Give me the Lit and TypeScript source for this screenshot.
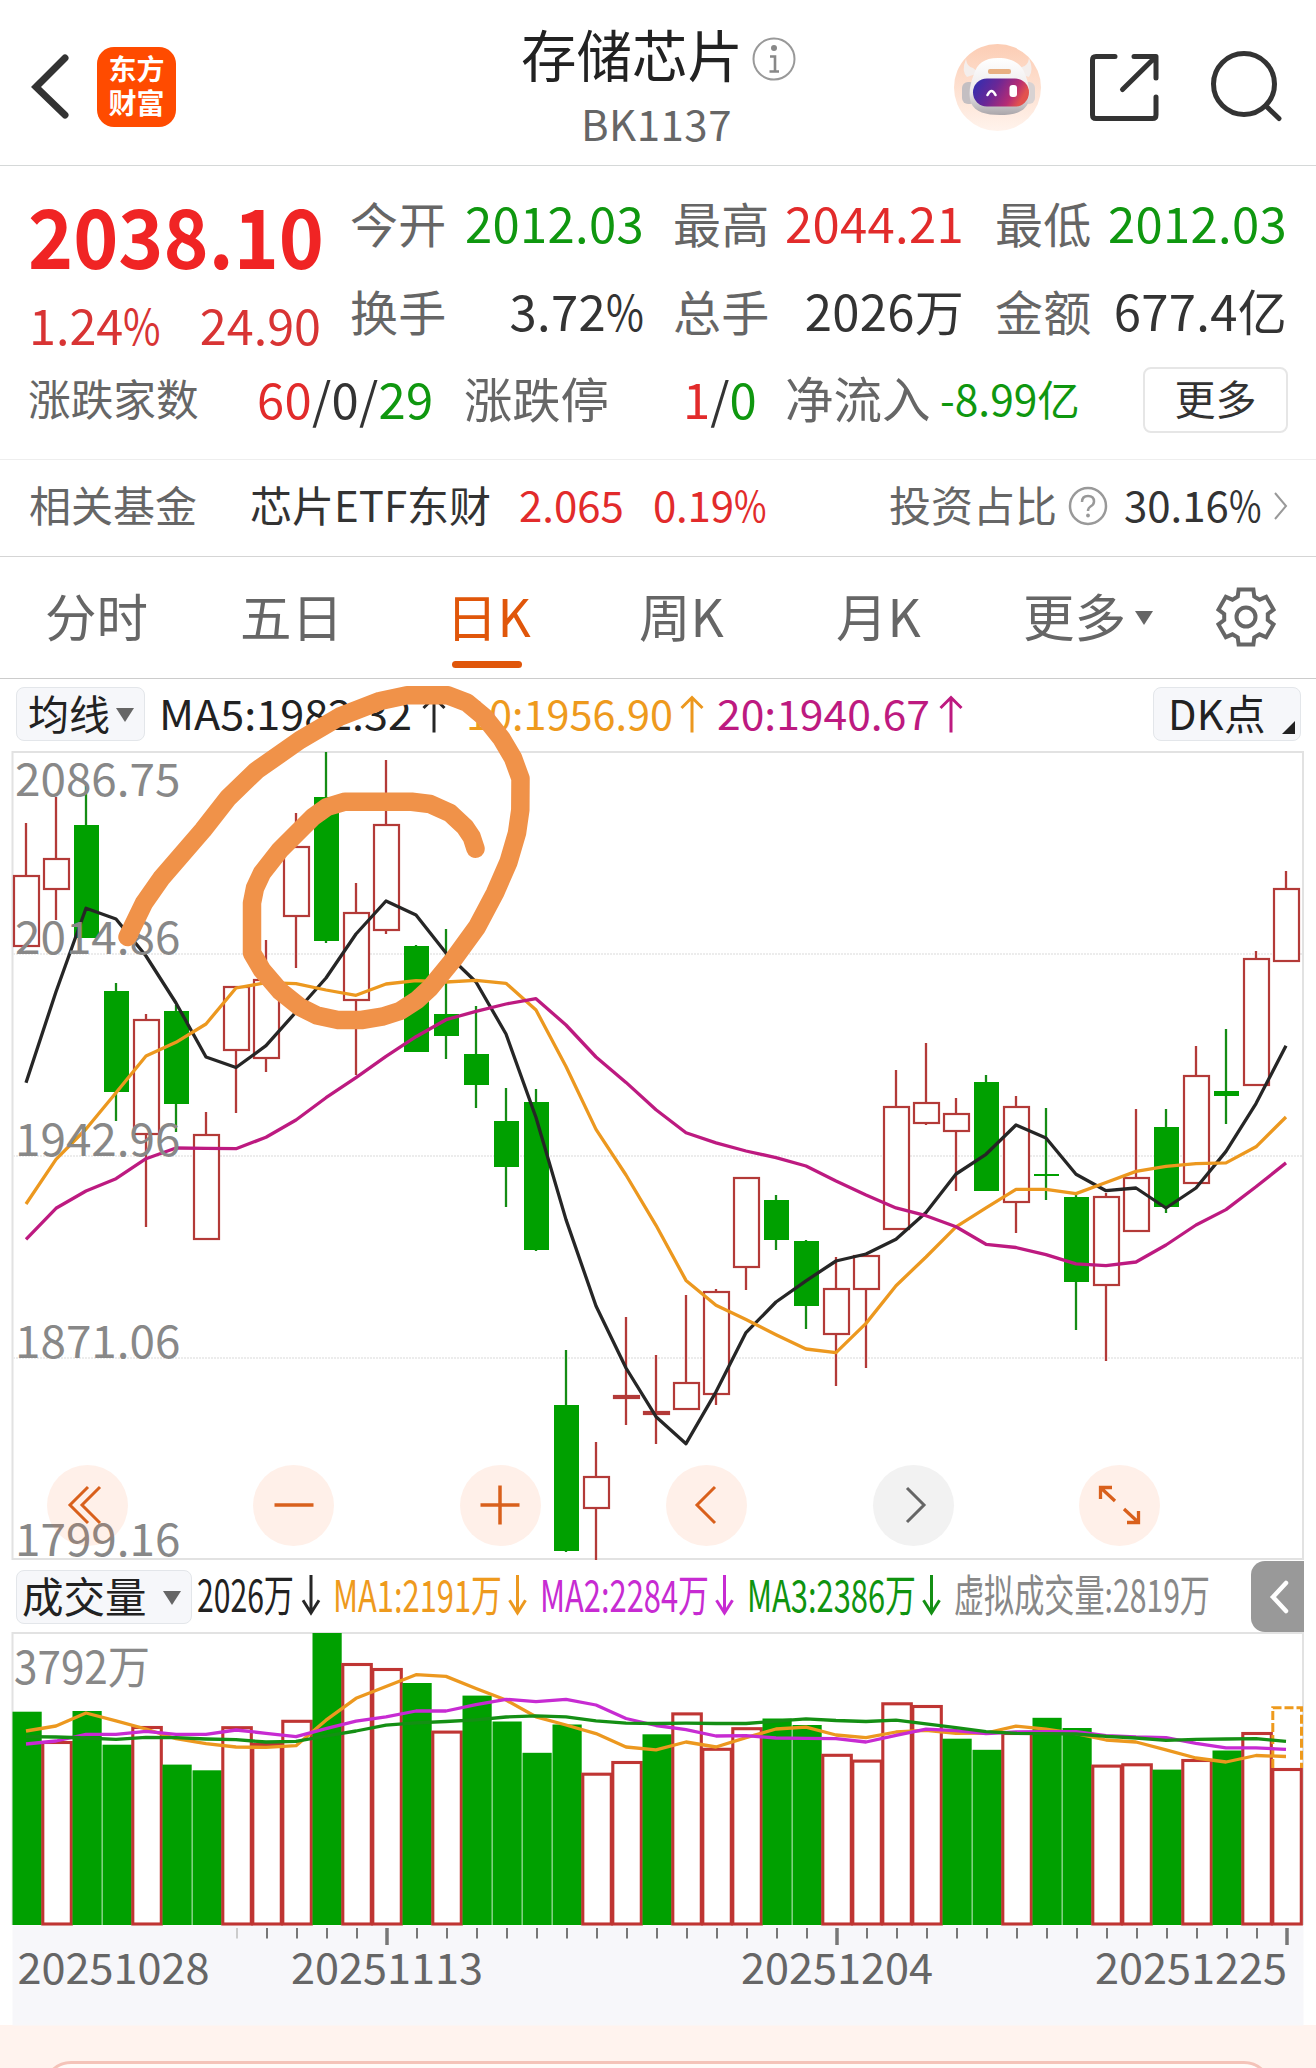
import { LitElement, html, svg, css } from "lit";
import { customElement } from "lit/decorators.js";

const STEP = 30;
const X0 = 26;

// [kind, bodyTop, bodyBottom, high, low]
type Candle = [string, number, number, number, number];
const CANDLES: Candle[] = [
  ["r", 875, 947, 823, 947], ["r", 858, 890, 797, 920], ["g", 825, 938, 786, 938], ["g", 991, 1092, 983, 1121],
  ["r", 1019, 1135, 1014, 1227], ["g", 1011, 1104, 1005, 1132], ["r", 1134, 1240, 1112, 1240], ["r", 986, 1051, 986, 1113],
  ["r", 979, 1059, 940, 1072], ["r", 846, 917, 813, 968], ["g", 797, 941, 752, 943], ["r", 912, 1001, 883, 1075],
  ["r", 824, 931, 760, 934], ["g", 946, 1052, 945, 1052], ["g", 1014, 1036, 929, 1059], ["g", 1054, 1085, 1006, 1108],
  ["g", 1121, 1167, 1088, 1207], ["g", 1102, 1250, 1089, 1251], ["g", 1405, 1551, 1350, 1552], ["r", 1476, 1509, 1442, 1560],
  ["r", 1395, 1399, 1317, 1425], ["r", 1411, 1415, 1355, 1444], ["r", 1382, 1410, 1295, 1410], ["r", 1291, 1395, 1289, 1405],
  ["r", 1177, 1268, 1177, 1290], ["g", 1200, 1240, 1195, 1250], ["g", 1241, 1306, 1240, 1329], ["r", 1288, 1335, 1257, 1386],
  ["r", 1255, 1290, 1255, 1368], ["r", 1106, 1230, 1070, 1230], ["r", 1102, 1124, 1043, 1125], ["r", 1113, 1132, 1098, 1191],
  ["g", 1082, 1191, 1075, 1191], ["r", 1106, 1203, 1096, 1233], ["g", 1174, 1176, 1108, 1200], ["g", 1197, 1282, 1195, 1330],
  ["r", 1196, 1286, 1193, 1361], ["r", 1177, 1232, 1109, 1232], ["g", 1127, 1207, 1109, 1213], ["r", 1075, 1184, 1046, 1184],
  ["g", 1091, 1096, 1029, 1124], ["r", 958, 1086, 951, 1086], ["r", 888, 962, 871, 962],
];

const MA5 = [1082.7, 991.7, 908.3, 919, 956, 1003, 1057, 1067.5, 1045.7, 1012, 978, 934, 901, 915, 953, 982, 1034, 1117.5, 1219.6, 1306, 1368, 1416.7, 1443.7, 1391.8, 1332.6, 1302, 1280.8, 1261, 1254, 1239.3, 1212.5, 1174, 1154.3, 1125, 1138, 1174.3, 1190.7, 1188, 1208, 1188, 1151.4, 1103.6, 1045.7];
const MA10 = [1204, 1159.3, 1129, 1092.7, 1056, 1042.3, 1024, 988, 982.7, 983.7, 990, 995.3, 984, 980.7, 982, 980.3, 983.3, 1010, 1066.5, 1129.4, 1175, 1225.3, 1280.4, 1305.3, 1319.6, 1334.7, 1349, 1352.6, 1323.4, 1285.7, 1257, 1226.8, 1207.9, 1189.3, 1189.3, 1193.6, 1182.5, 1171.4, 1166.4, 1163.6, 1162.9, 1146.8, 1117];
const MA20 = [1239.3, 1208.3, 1191, 1178.7, 1158.7, 1148, 1148.3, 1148.7, 1137.3, 1120, 1097.7, 1077.7, 1056.3, 1036.7, 1019.7, 1011.3, 1004, 998.7, 1025, 1057, 1082.4, 1109.8, 1132.7, 1142.9, 1151, 1157.6, 1166, 1181, 1195, 1207.9, 1215.7, 1226.8, 1244.3, 1247.5, 1254.6, 1263.9, 1265.7, 1262, 1245, 1225, 1209.6, 1186.8, 1162.9];

const VOLUME: [string, number][] = [
  ["g", 1711.7], ["r", 1741], ["g", 1711], ["g", 1744.7], ["r", 1726], ["g", 1764.6], ["g", 1770.3], ["r", 1726.2], ["r", 1743], ["r", 1719.8],
  ["g", 1633], ["r", 1663], ["r", 1668], ["g", 1683], ["r", 1730.6], ["g", 1695.6], ["g", 1721.5], ["g", 1752.8], ["g", 1724.5], ["r", 1772.7],
  ["r", 1761], ["g", 1734.3], ["r", 1712.4], ["r", 1747.8], ["r", 1727.2], ["g", 1718.5], ["g", 1725], ["r", 1753.8], ["r", 1759.6], ["r", 1702.3],
  ["r", 1705], ["g", 1738.7], ["g", 1749.8], ["r", 1732], ["g", 1717.8], ["g", 1728], ["r", 1764.6], ["r", 1763.3], ["g", 1769.6], ["r", 1759],
  ["g", 1750.5], ["r", 1732], ["r", 1768],
];
const V1 = [1731, 1726, 1713, 1720.8, 1729, 1738.7, 1743.7, 1747, 1747.4, 1745.7, 1720.2, 1698.3, 1686.5, 1674.7, 1676.4, 1688.5, 1700, 1716.8, 1725, 1733.6, 1747, 1749.8, 1742, 1747, 1737.7, 1729, 1727.2, 1735, 1737.7, 1732, 1730.3, 1733.3, 1733, 1726.2, 1729.2, 1733.6, 1740, 1742, 1749.8, 1758, 1762, 1755.5, 1756.5];
const V2 = [1744, 1741, 1734.3, 1734.3, 1731.3, 1734.3, 1734.3, 1730, 1733.3, 1736.6, 1728.6, 1721.2, 1716.8, 1711, 1711, 1704.7, 1699.3, 1701.6, 1699.3, 1705, 1718.5, 1725.5, 1729.6, 1736, 1735.6, 1738, 1738.3, 1738.7, 1742, 1735.3, 1729.2, 1730.6, 1733.6, 1732, 1731.6, 1731.6, 1735.6, 1737, 1737.7, 1743.4, 1747.8, 1747.8, 1749.4];
const V3 = [1736.6, 1737, 1738, 1739.3, 1737.3, 1737.7, 1739, 1739.7, 1742, 1741.4, 1736, 1731, 1725.2, 1722.8, 1721.5, 1719.8, 1717, 1715.8, 1716.8, 1720.8, 1723.2, 1723.5, 1723.2, 1723.5, 1723.5, 1721.2, 1718.8, 1720.5, 1721.5, 1720.2, 1723.9, 1727.6, 1731.6, 1733.3, 1733.6, 1734, 1736.3, 1738, 1740.4, 1739.3, 1739, 1738.7, 1741.4];

const STROKE: [number, number][] = [
  [127.5, 937], [144, 903], [161.5, 878], [203, 830], [228, 798], [256.5, 770.5], [300, 740], [340, 716.5], [380, 701],
  [407, 695.3], [448, 695.3], [467, 702.7], [485, 717.7], [501.5, 738.5], [513, 758], [520.5, 778.5], [520.3, 810],
  [517, 833], [508.5, 862], [495, 893], [477, 927], [453, 960], [430, 988], [417, 1000], [400, 1011], [382, 1016.7],
  [361.5, 1020], [338, 1020], [317, 1015.5], [300, 1007], [280, 991], [262, 970], [252, 953], [252, 903], [255, 888],
  [262, 873], [280, 850], [313, 817], [327, 807], [345, 801.7], [411.7, 801.7], [430, 804], [450, 813], [465, 827],
  [471.7, 837], [475.5, 848.7],
];

const line = (ys: number[]) => ys.map((y, i) => `${X0 + STEP * i},${y}`).join(" ");

const arrow = (x: number, top: number, bottom: number, half: number, up: boolean, cls: string) => {
  const tip = up ? top : bottom;
  const back = up ? tip + half : tip - half * 1.6;
  return svg`<path class="arrow ${cls}" d="M${x} ${top}V${bottom}M${x - half} ${back}L${x} ${tip}L${x + half} ${back}"/>`;
};

const label = (x: number, y: number, width: number, text: string, cls: string) =>
  svg`<text class=${cls} x=${x} y=${y} textLength=${width} lengthAdjust="spacingAndGlyphs">${text}</text>`;

const pct = html`<span class="pc">%</span>`;

@customElement("app-root")
export class AppRoot extends LitElement {
  static styles = css`
    :host { display: block; position: relative; width: 1316px; height: 2068px; overflow: hidden; background: #fff;
      font-family: "Noto Sans CJK SC", "Noto Sans", sans-serif; color: #333; }
    * { box-sizing: border-box; }
    svg { display: block; flex: none; overflow: visible; }
    span, b, button { white-space: nowrap; }
    .red { color: #e22b2b; } .green { color: #0f970f; }
    .pc { display: inline-block; transform: scaleX(0.84); transform-origin: left; margin-right: -0.15em; }
    header { display: grid; grid-template-columns: 450px 416px 450px; height: 166px; border-bottom: 1px solid #d5d8d8; }
    .left, .right { display: flex; align-items: center; height: 100%; }
    .left { padding: 9px 0 0 30px; gap: 27px; }
    .logo { display: flex; flex-direction: column; align-items: center; justify-content: center; width: 79px; height: 80px;
      border-radius: 17px; background: #ff4b00; color: #fff; font-size: 28px; font-weight: 700; line-height: 34px; padding-bottom: 5px; }
    .heading { display: flex; flex-direction: column; align-items: center; }
    .title { display: flex; align-items: center; gap: 9px; height: 58px; margin-top: 26px; padding-left: 1px; }
    .title svg { margin-top: 7px; }
    .name { font-size: 55.5px; line-height: 58px; height: 62px; color: #222; }
    .code { font-size: 42px; line-height: 50px; margin-top: 14px; color: #666; letter-spacing: 0.5px; margin-right: 3px; }
    .stats { height: 294px; border-bottom: 1px solid #eee; padding-top: 12px; }
    .top { display: grid; grid-template-columns: 350px 1fr; height: 177px; }
    .price { display: flex; flex-direction: column; padding: 6px 0 0 29px; }
    .change { display: flex; justify-content: space-between; width: 292px; font-size: 48.5px; line-height: 60px; padding-top: 25px; color: #d83434; }
    .grid { display: grid; grid-template-columns: 294px 320px 323px; grid-auto-rows: 88px; }
    .cell { display: flex; justify-content: space-between; align-items: center; font-size: 49px; line-height: 88px; height: 88px; letter-spacing: 0.3px; }
    .c2 { padding-left: 29px; } .c3 { padding-left: 31px; }
    .key { font-size: 48px; color: #666; }
    .third { display: flex; align-items: center; height: 80px; padding-left: 28px; margin-top: 2px; font-size: 49px; }
    .k43 { font-size: 42.7px; color: #666; width: 229px; }
    .v1 { width: 207px; letter-spacing: 0.3px; } .k48 { font-size: 48.3px; color: #666; width: 219px; }
    .v2 { width: 102px; } .k3 { width: 155px; font-size: 48.5px; color: #666; }
    .v3 { width: 203px; font-size: 42.5px; }
    .more { width: 145px; height: 66px; border: 2px solid #e6e6e6; border-radius: 8px; background: #fff; font: inherit; font-size: 41px;
      line-height: 54px; padding: 0 0 6px; color: #333; margin-top: 5px; }
    .fund { display: flex; align-items: center; height: 97px; border-bottom: 1px solid #d5d5d5; padding: 0 0 10px 29px; font-size: 42px; }
    .f1 { width: 221px; color: #666; } .f2 { width: 269px; } .f3 { width: 134px; } .f4 { width: 236px; letter-spacing: -0.2px; }
    .f5 { width: 179px; color: #666; } .help { margin: 6px 16px 0 0; } .f6 { width: 149px; } .go { margin-top: 6px; }
    .tabs { display: flex; align-items: center; height: 122px; border-bottom: 1px solid #ccc; color: #666; font-size: 51.5px; padding: 0 0 6px 45px; }
    .tab { width: 195px; line-height: 80px; } .t2 { width: 206px; } .t3 { width: 193px; color: #e0560a; position: relative; }
    .t3::after { content: ""; position: absolute; left: 6px; bottom: -13px; width: 70px; height: 7px; border-radius: 4px; background: #e0560a; }
    .t4 { width: 197px; } .t5 { width: 187px; } .t6 { width: 104px; }
    .caret { width: 0; height: 0; border: 9px solid transparent; border-top: 14px solid #666; border-bottom: 0; }
    .tri { margin: 6px 62px 0 8px; } .gear { margin-top: 4px; }
    .legend { display: flex; align-items: flex-start; height: 72px; padding-left: 16px; }
    .pill { display: flex; align-items: center; justify-content: space-between; border: 1.5px solid #e3e6ea; border-radius: 8px; background: #f6f7fa;
      color: #222; font-size: 41px; line-height: 46px; height: 54px; margin-top: 8px; width: 129px; padding: 0 10px 5px 11px; }
    .pill .caret { margin-top: 6px; }
    .dk { width: 148px; margin-left: 8px; padding: 0 5px 5px 14px; font-size: 41.5px; letter-spacing: 0.3px; }
    .corner { width: 0; height: 0; border-left: 13px solid transparent; border-bottom: 13px solid #222; margin: 32px 0 0 -8px; }
    .vol { width: 176px; margin-top: 10px; padding: 0 10px 5px 5px; font-size: 41.5px; }
    .side { display: flex; align-items: center; justify-content: center; width: 53px; height: 71px; margin: 1px 0 0 0; background: #999; border-radius: 14px 0 0 14px; }
    .side svg { margin-left: 4px; }
    .plot { position: relative; height: 809px; }
    .tools { position: absolute; left: 47px; top: 713.5px; display: flex; gap: 125.4px; }
    .tool { display: flex; align-items: center; justify-content: center; width: 81px; height: 81px; border-radius: 50%; background: rgba(255, 108, 40, 0.1); }
    .off { background: #f2f2f2; }
    .ink { position: absolute; left: 0; top: 0; pointer-events: none; }
    footer { height: 43px; background: #fff3ee; padding: 36px 44px 0 43px; overflow: hidden; }
    .card { height: 60px; border: 3px solid #f4c3b9; border-radius: 28px; background: #fffaf8; }
    text { font-family: "Noto Sans CJK SC", sans-serif; }
    .big { font-size: 82px; font-weight: 700; fill: #f02424; }
    .ma { font-size: 41px; } .va { font-size: 44px; } .axis { font-size: 45.5px; fill: #888; } .date { font-size: 42.5px; fill: #666; }
    .k { fill: #222; } .o { fill: #ee9a1d; } .p { fill: #bd1a80; } .m { fill: #c72bd2; } .gr { fill: #0f930f; } .gy { fill: #888; }
    .arrow { fill: none; stroke-width: 3; }
    .sk { stroke: #262626; } .so { stroke: #ec981f; } .sp { stroke: #bd1a80; } .sm { stroke: #c72bd2; } .sg { stroke: #148f14; }
    .up { fill: #fff; stroke: #b33a38; stroke-width: 2.2; } .dn { fill: #00a000; }
    .upv { fill: #fff; stroke: #bf3533; stroke-width: 3.1; }
    .wr { stroke: #b33a38; stroke-width: 2.3; } .wg { stroke: #148c14; stroke-width: 2.3; }
    .curve { fill: none; stroke-width: 3.3; stroke-linejoin: round; }
    .frame { fill: none; stroke: #e2e2e2; stroke-width: 2; } .dot { stroke: #ececec; stroke-width: 2; stroke-dasharray: 2 1; }
  `;

  private header() {
    return html`<header>
      <div class="left">
        <svg width="40" height="70" viewBox="30 52 40 70"><path d="M65 58L36 87L65 115" fill="none" stroke="#333" stroke-width="7" stroke-linecap="round"/></svg>
        <div class="logo"><span>东方</span><span>财富</span></div>
      </div>
      <div class="heading">
        <div class="title"><span class="name">存储芯片</span>
          <svg width="44" height="44" viewBox="0 0 44 44"><circle cx="22" cy="22" r="20.5" fill="none" stroke="#999" stroke-width="2"/><circle cx="22" cy="11" r="3" fill="#888"/><path d="M18 19.5H23V34.5M17.5 34.5H27" fill="none" stroke="#888" stroke-width="2.6"/></svg>
        </div>
        <span class="code">BK1137</span>
      </div>
      <div class="right">
        <svg width="450" height="120" viewBox="866 22 450 120">
          <defs>
            <linearGradient id="halo" x2="0" y2="1"><stop stop-color="#fccdb4"/><stop offset="1" stop-color="#fff3ec"/></linearGradient>
            <linearGradient id="visor" y2="0.3"><stop stop-color="#2b2fb4"/><stop offset=".45" stop-color="#6a2796"/><stop offset=".8" stop-color="#b52c74"/><stop offset="1" stop-color="#e2524e"/></linearGradient>
            <linearGradient id="helmet" x2="0" y2="1"><stop stop-color="#fff"/><stop offset=".6" stop-color="#ece9ea"/><stop offset="1" stop-color="#aaa6aa"/></linearGradient>
          </defs>
          <circle cx="997.5" cy="86.5" r="43.5" fill="url(#halo)"/>
          <path d="M966 58Q961 70 967 76L979 72L973 67Q967 66 966 58Z" fill="#f4eeec"/>
          <path d="M1029 57Q1034 69 1029 76L1016 72L1022 66Q1028 65 1029 57Z" fill="#f4eeec"/>
          <rect x="962" y="81" width="14" height="22" rx="6" fill="#c4bfc2"/><rect x="1023" y="81" width="12" height="22" rx="6" fill="#d8d2d2"/>
          <path d="M998 57C1012 57 1021 62 1025 73C1029 83 1031 92 1028 102C1024 112 1012 114 1000 114C986 114 975 111 971 102C968 93 970 83 974 73C977 63 984 57 998 57Z" fill="url(#helmet)"/>
          <rect x="988" y="68" width="23" height="5" rx="2" fill="#e8b083"/>
          <rect x="973" y="77.500" width="56" height="28" rx="14" fill="url(#visor)"/>
          <path d="M987.500 94Q991.500 86 995.500 94" fill="none" stroke="#fff" stroke-width="2.600" stroke-linecap="round"/>
          <rect x="1009.500" y="84" width="7.500" height="12" rx="3" fill="#fff"/>
          <g fill="none" stroke="#333" stroke-width="5" stroke-linecap="round" stroke-linejoin="round">
            <path d="M1115 55.500H1096Q1092.500 55.500 1092.500 59V114Q1092.500 117.500 1096 117.500H1152.500Q1156 117.500 1156 114V96"/>
            <path d="M1134 55.500H1156V77M1155 56.500L1122.500 88.500"/>
            <circle cx="1244" cy="83" r="30.500"/><path d="M1266 105L1279 117.500"/>
          </g>
        </svg>
      </div>
    </header>`;
  }

  private stats() {
    return html`<section class="stats">
      <div class="top">
        <div class="price">
          <svg width="300" height="85" viewBox="29 184 300 85">${label(28, 269, 296, "2038.10", "big")}</svg>
          <div class="change"><span>1.24${pct}</span><span>24.90</span></div>
        </div>
        <div class="grid">
          <div class="cell"><span class="key">今开</span><span class="green">2012.03</span></div>
          <div class="cell c2"><span class="key">最高</span><span class="red">2044.21</span></div>
          <div class="cell c3"><span class="key">最低</span><span class="green">2012.03</span></div>
          <div class="cell"><span class="key">换手</span><span>3.72${pct}</span></div>
          <div class="cell c2"><span class="key">总手</span><span>2026万</span></div>
          <div class="cell c3"><span class="key">金额</span><span>677.4亿</span></div>
        </div>
      </div>
      <div class="third">
        <span class="k43">涨跌家数</span><span class="v1"><span class="red">60</span>/0/<span class="green">29</span></span>
        <span class="k48">涨跌停</span><span class="v2"><span class="red">1</span>/<span class="green">0</span></span>
        <span class="k3">净流入</span><span class="v3 green">-8.99亿</span>
        <button class="more">更多</button>
      </div>
    </section>
    <section class="fund">
      <span class="f1">相关基金</span><span class="f2">芯片ETF东财</span><span class="f3 red">2.065</span><span class="f4 red">0.19${pct}</span>
      <span class="f5">投资占比</span>
      <svg class="help" width="40" height="40" viewBox="0 0 40 40"><circle cx="20" cy="20" r="18" fill="none" stroke="#999" stroke-width="2.500"/><path d="M14 16Q14 10 20 10Q26 10 26 15.500Q26 18.500 22.500 20.500Q20 22 20 25" fill="none" stroke="#999" stroke-width="2.500"/><circle cx="20" cy="29.500" r="1.900" fill="#999"/></svg>
      <span class="f6">30.16${pct}</span>
      <svg class="go" width="16" height="30" viewBox="0 0 16 30"><path d="M2 2L13 15L2 28" fill="none" stroke="#999" stroke-width="2"/></svg>
    </section>`;
  }

  private tabs() {
    const c = 31;
    // Six teeth: outer edge at r 28.5, valleys at r 22.
    const pts: string[] = [];
    for (let i = 0; i < 6; i++) {
      for (const [da, r] of [[-15, 28.5], [15, 28.5], [22, 22], [38, 22]]) {
        const a = ((i * 60 + da - 90) * Math.PI) / 180;
        pts.push(`${c + r * Math.cos(a)},${c + r * Math.sin(a)}`);
      }
    }
    return html`<nav class="tabs">
      <span class="tab">分时</span><span class="tab t2">五日</span><span class="tab t3">日K</span><span class="tab t4">周K</span>
      <span class="tab t5">月K</span><span class="tab t6">更多</span><i class="caret tri"></i>
      <svg class="gear" width="62" height="62" viewBox="0 0 62 62" fill="none" stroke="#666" stroke-width="4"><polygon points=${pts.join(" ")}/><circle cx="31" cy="31" r="9.500"/></svg>
    </nav>`;
  }

  private price() {
    const tool = (cls: string, color: string, d: string, w = 3) =>
      html`<div class="tool ${cls}"><svg width="50" height="50" viewBox="-25 -25 50 50"><path d=${d} fill="none" stroke=${color} stroke-width=${w}/></svg></div>`;
    const or = "#d9601c";
    return html`<div class="legend">
      <div class="pill">均线<i class="caret"></i></div>
      <svg width="1000" height="72" viewBox="145 679 1000 72">
        ${label(159, 730, 253, "MA5:1982.32", "ma k")}${arrow(434, 697.5, 732.5, 10.5, true, "sk")}
        ${label(466, 730, 207, "10:1956.90", "ma o")}${arrow(692, 697.5, 732.5, 10.5, true, "so")}
        ${label(717, 730, 213, "20:1940.67", "ma p")}${arrow(951, 697.5, 732.5, 10.5, true, "sp")}
      </svg>
      <div class="pill dk">DK点<i class="corner"></i></div>
    </div>
    <div class="plot">
      <svg width="1316" height="809" viewBox="0 751 1316 809">
        <path class="frame" d="M12.500 1559V752H1303V1559Z"/>
        ${[954, 1156, 1358].map((y) => svg`<path class="dot" d="M13 ${y}H1302"/>`)}
        ${CANDLES.map(([k, t, b, hi, lo], i) => {
          const x = X0 + STEP * i;
          const wick = svg`<path class=${k === "r" ? "wr" : "wg"} d="M${x} ${hi}V${lo}"/>`;
          return k === "r"
            ? svg`${wick}<rect class="up" x=${x - 12} y=${t + 1} width="25" height=${b - t - 2}/>`
            : svg`${wick}<rect class="dn" x=${x - 12} y=${t} width="25" height=${b - t}/>`;
        })}
        <polyline class="curve sk" points=${line(MA5)}/>
        <polyline class="curve so" points=${line(MA10)}/>
        <polyline class="curve sp" points=${line(MA20)}/>
        ${[["2086.75", 796], ["2014.86", 954], ["1942.96", 1155.7], ["1871.06", 1358], ["1799.16", 1556]].map(([t, y]) => label(15, y as number, 165.5, t as string, "axis"))}
      </svg>
      <div class="tools">
        ${tool("", or, "M0 -18L-18 0L0 18M12 -18L-6 0L12 18")}
        ${tool("", or, "M-19.500 0H19.500", 3.5)}
        ${tool("", or, "M-19.500 0H19.500M0 -19.500V19.500", 3.5)}
        ${tool("", or, "M8 -18L-10 0L8 18")}
        ${tool("off", "#666", "M-6 -17L11 0L-6 17")}
        ${tool("", or, "M-4 -4L-18 -17M-18.500 -6V-17.500H-7M5 4L19 17M19.500 6V17.500H8", 3.3)}
      </div>
    </div>`;
  }

  private volume() {
    const ticks: unknown[] = [];
    for (let i = 7; i <= 42; i++) {
      const major = i % 15 === 12;
      const x = X0 + 1 + STEP * i;
      ticks.push(svg`<path d="M${x} 1928V${major ? 1945 : 1938.5}" stroke=${i === 7 ? "#ccc" : "#777"} stroke-width=${major ? 3.5 : 2}/>`);
    }
    return html`<div class="legend">
      <div class="pill vol">成交量<i class="caret"></i></div>
      <svg width="1059" height="72" viewBox="192 1560 1059 72">
        ${label(197, 1612, 97, "2026万", "va k")}${arrow(311, 1575, 1613, 8, false, "sk")}
        ${label(333, 1612, 169, "MA1:2191万", "va o")}${arrow(517.5, 1575, 1613, 8, false, "so")}
        ${label(540, 1612, 169, "MA2:2284万", "va m")}${arrow(724.5, 1575, 1613, 8, false, "sm")}
        ${label(747, 1612, 169, "MA3:2386万", "va gr")}${arrow(931.5, 1575, 1613, 8, false, "sg")}
        ${label(954, 1612, 256, "虚拟成交量:2819万", "va gy")}
      </svg>
      <div class="side"><svg width="22" height="36" viewBox="0 0 22 36"><path d="M17 4L4 18L17 32" fill="none" stroke="#fff" stroke-width="4.500" stroke-linecap="round"/></svg></div>
    </div>
    <svg width="1316" height="393" viewBox="0 1632 1316 393">
      <path class="frame" d="M12.500 1925V1633H1303V1925"/>
      <rect x="12.500" y="1925.500" width="1291" height="100" fill="#f7f7fa"/>
      ${VOLUME.map(([k, t], i) => {
        const x = X0 + STEP * i;
        return k === "r"
          ? svg`<rect class="upv" x=${x - 13.2} y=${t + 1.5} width="28.500" height=${1925 - t - 2.5}/>`
          : svg`<rect class="dn" x=${x - 13.5} y=${t} width="29.200" height=${1925 - t}/>`;
      })}
      <path d="M1272.800 1768V1707.700H1301.500V1768" fill="none" stroke="#ee9a1d" stroke-width="3" stroke-dasharray="9 3"/>
      ${label(14, 1684, 136, "3792万", "axis")}
      <polyline class="curve so" points=${line(V1)}/>
      <polyline class="curve sm" points=${line(V2)}/>
      <polyline class="curve sg" points=${line(V3)}/>
      ${ticks}
      ${label(17.5, 1984, 192, "20251028", "date")}${label(291, 1984, 192, "20251113", "date")}
      ${label(741, 1984, 192, "20251204", "date")}${label(1095, 1984, 192, "20251225", "date")}
    </svg>`;
  }

  render() {
    return html`${this.header()}${this.stats()}${this.tabs()}${this.price()}${this.volume()}
      <footer><div class="card"></div></footer>
      <svg class="ink" width="1316" height="2068"><polyline points=${STROKE.map((p) => p.join(",")).join(" ")} fill="none" stroke="#f09249" stroke-width="18.500" stroke-linecap="round" stroke-linejoin="round"/></svg>`;
  }
}
